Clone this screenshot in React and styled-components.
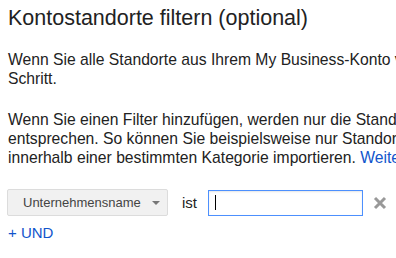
import React from "react";
import styled, { createGlobalStyle } from "styled-components";

const Global = createGlobalStyle`
  html, body { margin: 0; padding: 0; background: #fff; overflow: hidden; }
  body { font-family: "Liberation Sans", Arial, sans-serif; color: #222; }
`;

const Page = styled.div`
  width: 800px;
  padding: 6px 0 0 8px;
`;

const Title = styled.h2`
  margin: 0 0 20px;
  font-size: 21.5px;
  font-weight: normal;
  line-height: 24px;
  color: #222;
`;

const Para = styled.p`
  margin: 0 0 22px;
  font-size: 15.7px;
  line-height: 19px;
  white-space: nowrap;
`;

const Link = styled.a`
  color: #15c;
  text-decoration: none;
`;

const FilterRow = styled.div`
  display: flex;
  align-items: center;
  margin-top: 1px;
`;

const Dropdown = styled.div`
  box-sizing: border-box;
  width: 161px;
  height: 27px;
  margin-left: -1px;
  display: flex;
  align-items: center;
  padding-left: 15px;
  gap: 11px;
  background: #f1f1f1;
  border: 1px solid #dcdcdc;
  border-radius: 2px;
  font-size: 13px;
  color: #444;
`;

const Arrow = styled.span`
  width: 0;
  height: 0;
  border-left: 4px solid transparent;
  border-right: 4px solid transparent;
  border-top: 4px solid #777;
`;

const Op = styled.span`
  font-size: 15px;
  margin: 0 11px 0 14px;
`;

const Field = styled.div`
  box-sizing: border-box;
  width: 155px;
  height: 26px;
  border: 1px solid #4d90fe;
  box-shadow: inset 0 1px 2px rgba(0,0,0,0.1);
  display: flex;
  align-items: center;
  padding-left: 6px;
`;

const Caret = styled.span`
  width: 1px;
  height: 15px;
  background: #000;
`;

const Remove = styled.span`
  margin-left: 10px;
  display: flex;
`;

const AddLink = styled.a`
  display: block;
  margin-top: 8px;
  font-size: 15px;
  line-height: 17px;
  color: #15c;
  text-decoration: none;
`;

export default function App() {
  return (
    <Page>
      <Global />
      <Title>Kontostandorte filtern (optional)</Title>
      <Para>
        Wenn Sie alle Standorte aus Ihrem My Business-Konto verwenden möchten, fahren Sie mit dem nächsten
        <br />
        Schritt.
      </Para>
      <Para>
        Wenn Sie einen Filter hinzufügen, werden nur die Standorte importiert, die den angegebenen Kriterien
        <br />
        entsprechen. So können Sie beispielsweise nur Standorte mit einem bestimmten Namen oder
        <br />
        innerhalb einer bestimmten Kategorie importieren. <Link href="#">Weitere Informationen</Link>
      </Para>
      <FilterRow>
        <Dropdown>
          Unternehmensname <Arrow />
        </Dropdown>
        <Op>ist</Op>
        <Field>
          <Caret />
        </Field>
        <Remove>
          <svg width="14" height="14" viewBox="0 0 14 14">
            <path d="M2 2 L12 12 M12 2 L2 12" stroke="#999" strokeWidth="3" />
          </svg>
        </Remove>
      </FilterRow>
      <AddLink href="#">+ UND</AddLink>
    </Page>
  );
}
